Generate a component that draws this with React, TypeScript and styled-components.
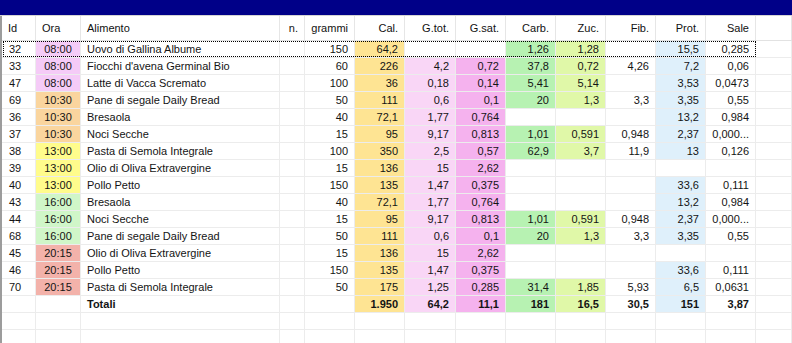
import React from 'react';
import styled, { createGlobalStyle, css } from 'styled-components';

const GlobalStyle = createGlobalStyle`
  html, body {
    margin: 0;
    padding: 0;
    background: #ffffff;
    overflow: hidden;
  }
  body {
    font-family: "Liberation Sans", Arial, sans-serif;
    font-size: 11px;
    color: #000;
  }
`;

const COLS = '34px 45px 199px 25px 50px 50px 51px 50px 50px 50px 50px 50px 50px 1fr';

const Page = styled.div`
  width: 792px;
  height: 343px;
  overflow: hidden;
  display: flex;
  flex-direction: column;
`;

const TitleBar = styled.div`
  height: 15px;
  flex: 0 0 15px;
  background: #000088;
  border-bottom: 1px solid #d4d4d4;
`;

const Grid = styled.div`
  flex: 1;
  border-left: 2px solid #9c9c9c;
  background: #fff;
`;

const RowBase = styled.div`
  display: grid;
  grid-template-columns: ${COLS};
  position: relative;
`;

const HeaderRow = styled(RowBase)`
  height: 24px;
  border-bottom: 1px solid #e2e2e2;
`;

const Row = styled(RowBase)<{ $focus?: boolean }>`
  height: 17px;
  ${(p) =>
    p.$focus &&
    css`
      &::after {
        content: '';
        position: absolute;
        left: 1px;
        top: 0;
        width: 753px;
        height: 16px;
        box-sizing: border-box;
        border: 1px dotted #000;
        pointer-events: none;
      }
    `}
`;

const HeadCell = styled.div<{ $align?: 'left' | 'right' }>`
  display: flex;
  align-items: center;
  justify-content: ${(p) => (p.$align === 'right' ? 'flex-end' : 'flex-start')};
  padding: 0 6px;
  border-right: 1px solid #e6e6e6;
  white-space: nowrap;
  color: #111;
`;

const Cell = styled.div<{ $align?: 'left' | 'right' | 'center'; $bg?: string; $bold?: boolean }>`
  display: flex;
  align-items: center;
  justify-content: ${(p) =>
    p.$align === 'right' ? 'flex-end' : p.$align === 'center' ? 'center' : 'flex-start'};
  padding: 0 6px;
  height: 16px;
  line-height: 16px;
  background: ${(p) => p.$bg || '#fff'};
  border-right: 1px solid #ececec;
  border-bottom: 1px solid #ececec;
  white-space: nowrap;
  overflow: hidden;
  font-weight: ${(p) => (p.$bold ? 'bold' : 'normal')};
  color: #141414;
`;

const IdCell = styled(Cell)`
  padding-left: 7px;
`;

const ORA_COLORS: Record<string, string> = {
  '08:00': '#f5cbf7',
  '10:30': '#fad59e',
  '13:00': '#fffc8c',
  '16:00': '#d0f6c8',
  '20:15': '#f3b2aa',
};

// colours of the nutrient columns, only where the cell has a value
const NUM_COLORS = ['', '#fee493', '#f9d6f6', '#f5b2ee', '#b7f2b2', '#e0f8a8', '', '#dff0fb', ''];

type Item = [number, string, string, number, string, string, string, string, string, string, string, string];

const rows: Item[] = [
  [32, '08:00', 'Uovo di Gallina Albume', 150, '64,2', '', '', '1,26', '1,28', '', '15,5', '0,285'],
  [33, '08:00', "Fiocchi d'avena Germinal Bio", 60, '226', '4,2', '0,72', '37,8', '0,72', '4,26', '7,2', '0,06'],
  [47, '08:00', 'Latte di Vacca Scremato', 100, '36', '0,18', '0,14', '5,41', '5,14', '', '3,53', '0,0473'],
  [69, '10:30', 'Pane di segale Daily Bread', 50, '111', '0,6', '0,1', '20', '1,3', '3,3', '3,35', '0,55'],
  [36, '10:30', 'Bresaola', 40, '72,1', '1,77', '0,764', '', '', '', '13,2', '0,984'],
  [37, '10:30', 'Noci Secche', 15, '95', '9,17', '0,813', '1,01', '0,591', '0,948', '2,37', '0,000...'],
  [38, '13:00', 'Pasta di Semola Integrale', 100, '350', '2,5', '0,57', '62,9', '3,7', '11,9', '13', '0,126'],
  [39, '13:00', 'Olio di Oliva Extravergine', 15, '136', '15', '2,62', '', '', '', '', ''],
  [40, '13:00', 'Pollo Petto', 150, '135', '1,47', '0,375', '', '', '', '33,6', '0,111'],
  [43, '16:00', 'Bresaola', 40, '72,1', '1,77', '0,764', '', '', '', '13,2', '0,984'],
  [44, '16:00', 'Noci Secche', 15, '95', '9,17', '0,813', '1,01', '0,591', '0,948', '2,37', '0,000...'],
  [68, '16:00', 'Pane di segale Daily Bread', 50, '111', '0,6', '0,1', '20', '1,3', '3,3', '3,35', '0,55'],
  [45, '20:15', 'Olio di Oliva Extravergine', 15, '136', '15', '2,62', '', '', '', '', ''],
  [46, '20:15', 'Pollo Petto', 150, '135', '1,47', '0,375', '', '', '', '33,6', '0,111'],
  [70, '20:15', 'Pasta di Semola Integrale', 50, '175', '1,25', '0,285', '31,4', '1,85', '5,93', '6,5', '0,0631'],
];

const totals = ['1.950', '64,2', '11,1', '181', '16,5', '30,5', '151', '3,87'];

const headers: [string, 'left' | 'right'][] = [
  ['Id', 'left'],
  ['Ora', 'left'],
  ['Alimento', 'left'],
  ['n.', 'right'],
  ['grammi', 'right'],
  ['Cal.', 'right'],
  ['G.tot.', 'right'],
  ['G.sat.', 'right'],
  ['Carb.', 'right'],
  ['Zuc.', 'right'],
  ['Fib.', 'right'],
  ['Prot.', 'right'],
  ['Sale', 'right'],
];

const NumCells = ({ values, bold }: { values: string[]; bold?: boolean }) => (
  <>
    {values.map((v, i) => (
      <Cell key={i} $align="right" $bold={bold} $bg={v ? NUM_COLORS[i + 1] || undefined : undefined}>
        {v}
      </Cell>
    ))}
  </>
);

const EmptyRow = () => (
  <Row>
    {Array.from({ length: 14 }).map((_, i) => (
      <Cell key={i} />
    ))}
  </Row>
);

export default function App() {
  return (
    <Page>
      <GlobalStyle />
      <TitleBar />
      <Grid>
        <HeaderRow>
          {headers.map(([h, a]) => (
            <HeadCell key={h} $align={a}>
              {h}
            </HeadCell>
          ))}
          <HeadCell />
        </HeaderRow>
        {rows.map((r, idx) => (
          <Row key={idx} $focus={idx === 0}>
            <IdCell>{r[0]}</IdCell>
            <Cell $align="center" $bg={ORA_COLORS[r[1]]}>
              {r[1]}
            </Cell>
            <Cell>{r[2]}</Cell>
            <Cell />
            <Cell $align="right">{r[3]}</Cell>
            <NumCells values={r.slice(4) as string[]} />
            <Cell />
          </Row>
        ))}
        <Row>
          <IdCell />
          <Cell />
          <Cell $bold>Totali</Cell>
          <Cell />
          <Cell />
          <NumCells values={totals} bold />
          <Cell />
        </Row>
        <EmptyRow />
        <EmptyRow />
      </Grid>
    </Page>
  );
}
